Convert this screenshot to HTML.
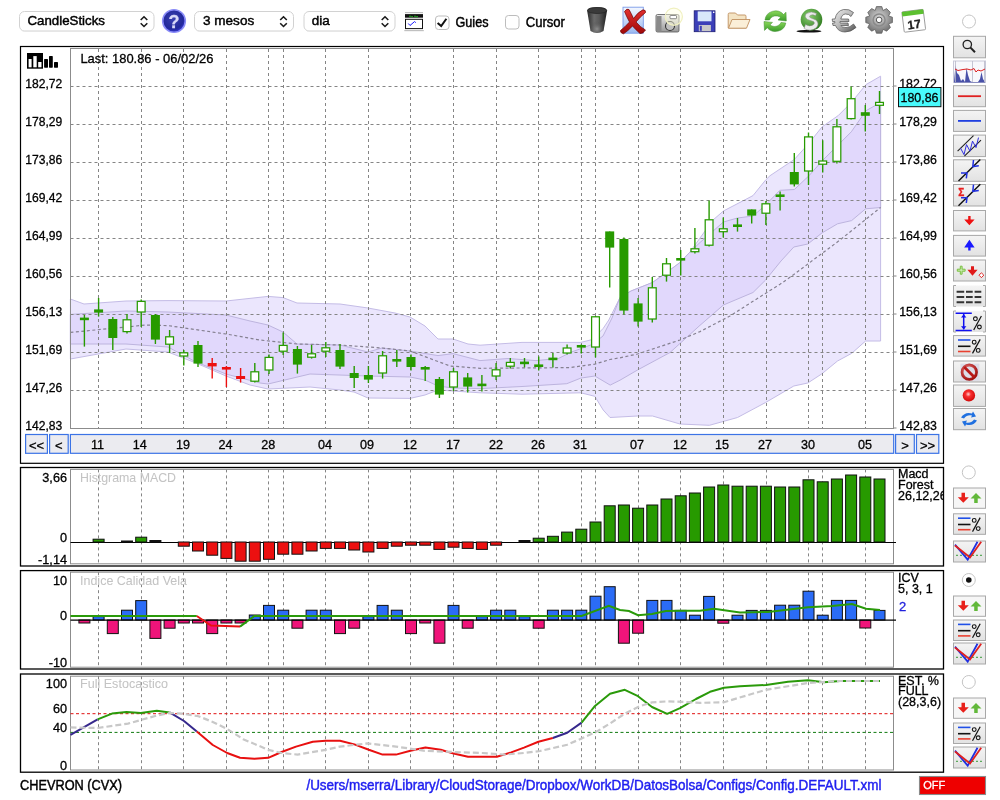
<!DOCTYPE html><html><head><meta charset="utf-8"><style>html,body{margin:0;padding:0;background:#fff;width:1000px;height:800px;overflow:hidden}svg{display:block}</style></head><body>
<svg width="1000" height="800" viewBox="0 0 1000 800" font-family="Liberation Sans, sans-serif" style="will-change:transform">
<defs>
<linearGradient id="gbtn" x1="0" y1="0" x2="0" y2="1"><stop offset="0" stop-color="#f4f4f4"/><stop offset="1" stop-color="#e2e2e2"/></linearGradient>
<radialGradient id="ghelp" cx="0.45" cy="0.4" r="0.65"><stop offset="0" stop-color="#3a40b0"/><stop offset="0.7" stop-color="#22289a"/><stop offset="1" stop-color="#3a3ae0"/></radialGradient>
<linearGradient id="gtrash" x1="0" y1="0" x2="1" y2="0"><stop offset="0" stop-color="#3a3a3a"/><stop offset="0.5" stop-color="#8a8a8a"/><stop offset="1" stop-color="#2e2e2e"/></linearGradient>
<radialGradient id="ggear" cx="0.5" cy="0.4" r="0.6"><stop offset="0" stop-color="#d8d8d8"/><stop offset="1" stop-color="#707070"/></radialGradient>
</defs>
<rect x="19.5" y="11.5" width="134.5" height="19.5" rx="5" fill="#fff" stroke="#d2d2d2" stroke-width="1"/>
<rect x="22.5" y="30.6" width="128.5" height="1" fill="#e6e6e6"/>
<text x="27.4" y="25" font-size="13.5" fill="#000" textLength="77.6" lengthAdjust="spacingAndGlyphs" stroke="#000" stroke-width="0.45">CandleSticks</text>
<path d="M140.7 20 L144.0 16.8 L147.3 20 M140.7 23.3 L144.0 26.5 L147.3 23.3" fill="none" stroke="#1a1a1a" stroke-width="1.6"/>
<rect x="194.5" y="11.5" width="99.0" height="19.5" rx="5" fill="#fff" stroke="#d2d2d2" stroke-width="1"/>
<rect x="197.5" y="30.6" width="93.0" height="1" fill="#e6e6e6"/>
<text x="203.0" y="25" font-size="13.5" fill="#000" textLength="51.2" lengthAdjust="spacingAndGlyphs" stroke="#000" stroke-width="0.45">3 mesos</text>
<path d="M280.2 20 L283.5 16.8 L286.8 20 M280.2 23.3 L283.5 26.5 L286.8 23.3" fill="none" stroke="#1a1a1a" stroke-width="1.6"/>
<rect x="304.0" y="11.5" width="91.0" height="19.5" rx="5" fill="#fff" stroke="#d2d2d2" stroke-width="1"/>
<rect x="307.0" y="30.6" width="85.0" height="1" fill="#e6e6e6"/>
<text x="311.8" y="25" font-size="13.5" fill="#000" textLength="18.0" lengthAdjust="spacingAndGlyphs" stroke="#000" stroke-width="0.45">dia</text>
<path d="M381.7 20 L385.0 16.8 L388.3 20 M381.7 23.3 L385.0 26.5 L388.3 23.3" fill="none" stroke="#1a1a1a" stroke-width="1.6"/>
<circle cx="174" cy="21" r="11.3" fill="url(#ghelp)" stroke="#8a8cf8" stroke-width="1.6"/>
<text x="174" y="27.8" font-size="18" font-weight="bold" fill="#d8d8f8" text-anchor="middle" stroke="#d8d8f8" stroke-width="0.3">?</text>
<rect x="405" y="12" width="18" height="1.2" fill="#c0c0c0"/>
<rect x="405" y="14.1" width="18" height="3.6" fill="#111"/>
<path d="M409 16.6 q1 -1.5 2 0 q1 1 2 -0.3 M414 16.6 q1 -1.5 2 0 q1 1 2 -0.3" stroke="#22c022" stroke-width="0.9" fill="none"/>
<rect x="405.5" y="19.3" width="17" height="9.3" fill="#fff" stroke="#111" stroke-width="1"/>
<path d="M408.3 23.5 L410 25.5 L414.5 21.6 L415.8 22.6" stroke="#1a1aff" stroke-width="1" fill="none"/>
<rect x="404.3" y="30" width="19.5" height="1.2" fill="#c0c0c0"/>
<rect x="435.5" y="16" width="13.5" height="13.5" rx="3" fill="#fff" stroke="#bdbdbd"/>
<path d="M437.6 22.9 L441.2 26.1 L446.4 18.7" stroke="#111" stroke-width="2" fill="none"/>
<text x="455.5" y="26.8" font-size="14" fill="#000" textLength="33" lengthAdjust="spacingAndGlyphs" stroke="#000" stroke-width="0.45">Guies</text>
<rect x="505.5" y="15.5" width="13.5" height="13.5" rx="3" fill="#fff" stroke="#bdbdbd"/>
<text x="525.7" y="26.8" font-size="14" fill="#000" textLength="39.3" lengthAdjust="spacingAndGlyphs" stroke="#000" stroke-width="0.45">Cursor</text>
<defs><linearGradient id="gtr2" x1="0" y1="0" x2="1" y2="0"><stop offset="0" stop-color="#2a2a2a"/><stop offset="0.35" stop-color="#6a6a6a"/><stop offset="0.6" stop-color="#5a5a5a"/><stop offset="1" stop-color="#1e1e1e"/></linearGradient><radialGradient id="gtr3" cx="0.5" cy="0.75" r="0.5"><stop offset="0" stop-color="#9a9a9a" stop-opacity="0.8"/><stop offset="1" stop-color="#444" stop-opacity="0"/></radialGradient><linearGradient id="gxb" x1="0" y1="0" x2="0" y2="1"><stop offset="0" stop-color="#f4f8ff"/><stop offset="1" stop-color="#9ab8f0"/></linearGradient><linearGradient id="gxr" x1="0" y1="0" x2="0" y2="1"><stop offset="0" stop-color="#e23030"/><stop offset="1" stop-color="#a00808"/></linearGradient><linearGradient id="gcam" x1="0" y1="0" x2="0" y2="1"><stop offset="0" stop-color="#e8e8e8"/><stop offset="1" stop-color="#9a9a9a"/></linearGradient><linearGradient id="grf" x1="0" y1="0" x2="0" y2="1"><stop offset="0" stop-color="#8ad85a"/><stop offset="1" stop-color="#3a9a2a"/></linearGradient><linearGradient id="geu" x1="0" y1="0" x2="1" y2="1"><stop offset="0" stop-color="#f0f0f0"/><stop offset="0.5" stop-color="#b8b8b8"/><stop offset="1" stop-color="#505050"/></linearGradient><radialGradient id="gdl" cx="0.4" cy="0.35" r="0.7"><stop offset="0" stop-color="#8ad070"/><stop offset="1" stop-color="#2e7a1e"/></radialGradient></defs>
<path d="M587.2 11 Q587 7 597 7 Q607 7 607 11 L603.5 31 Q597 35 590.5 31 Z" fill="url(#gtr2)"/>
<path d="M589 20 Q597 14 605 20 L603.5 31 Q597 35 590.5 31 Z" fill="url(#gtr3)"/>
<ellipse cx="597.1" cy="10.5" rx="9.6" ry="3" fill="#3a3a3a" stroke="#222" stroke-width="0.7"/>
<rect x="623" y="7.2" width="20.3" height="26" fill="url(#gxb)" stroke="#7a9ae8" stroke-width="0.9"/>
<path d="M624.5 11.5 Q627 8 629 9.5 Q631 13 633.5 18.5 Q638 12 643 9.8 Q646 10 645.5 12.5 Q640 17 636 22 Q640 27 645.5 30 Q643 34 640 33.5 Q636 30 632.5 26 Q628 31 623.5 33.8 Q620 33 620.5 30.5 Q625 27 629.5 22 Q626.5 16.5 624.5 11.5 Z" fill="url(#gxr)" stroke="#6a0000" stroke-width="0.7"/>
<rect x="656" y="14.5" width="23" height="17.5" rx="1.5" fill="url(#gcam)" stroke="#555" stroke-width="0.8"/>
<rect x="656.5" y="16" width="5" height="15.5" fill="#8a8a8a"/>
<circle cx="670" cy="26" r="4.5" fill="#c0c0c0" stroke="#333" stroke-width="1.1"/>
<circle cx="673.8" cy="16.7" r="8.6" fill="#ffffe0" fill-opacity="0.45" stroke="#f0f0c0" stroke-width="1.2"/>
<rect x="670" y="15.5" width="6.5" height="3.2" rx="0.8" fill="#fff" stroke="#444" stroke-width="0.6"/>
<rect x="694.2" y="10.8" width="20.8" height="20.9" fill="#3b3fb8" stroke="#1a1a70" stroke-width="0.8"/>
<rect x="697.7" y="11.4" width="13.8" height="9.9" fill="#d8e8fa"/>
<rect x="713" y="11.6" width="1.4" height="1.4" fill="#fff"/>
<rect x="698.8" y="25" width="12.1" height="6.2" fill="#c8c8c8"/>
<rect x="699.8" y="25.8" width="2" height="5" fill="#3b3fb8"/>
<path d="M728.2 14.5 Q728 13 729.5 13 L735.5 13 L737.5 15 L745 15 Q746 15 746 16.5 L746 28 L728.2 28 Z" fill="#f4e4c4" stroke="#c09060" stroke-width="0.9"/>
<path d="M728.5 28.2 L732 19.5 L750 19.5 L746.5 28.2 Z" fill="#fbefd8" stroke="#c09060" stroke-width="0.9"/>
<path d="M765 20 A10.5 10 0 0 1 783.5 14.5 L786 12.2 L786.3 21 L778 20 L780.6 17.6 A6.8 6.2 0 0 0 769.5 20 Z" fill="url(#grf)" stroke="#3a8a2a" stroke-width="0.5"/>
<path d="M785.8 23 A10.5 10 0 0 1 767.3 27.8 L764.5 30.4 L764 21.5 L772.5 22.4 L770 24.8 A6.8 6.2 0 0 0 781 22.4 Z" fill="url(#grf)" stroke="#3a8a2a" stroke-width="0.5"/>
<ellipse cx="809" cy="31.2" rx="12.5" ry="1.4" fill="#111"/>
<circle cx="811.5" cy="19.6" r="10.8" fill="url(#gdl)"/>
<path d="M816.5 13.5 Q811 10.5 806.5 13.5 Q803.5 16.5 807.5 19.5 L813.5 21.5 Q815.5 23 813 25 Q809.5 27 805.5 24.5 L804 28.5 Q810.5 32 816 28 Q820 24 816 20 L810.5 17.8 Q808.5 16.8 810.5 15.2 Q813 14 815.5 15.8 Z" fill="#ececec" stroke="#888" stroke-width="0.5"/>
<path d="M853.5 12.5 Q849 8.5 843.5 9.5 Q836.5 11 835 19 L832.2 19 L832.5 21.5 L834.8 21.5 L834.8 23 L832.5 23 L833 25.5 L835.5 25.5 Q838 32 845 32 Q851 32 856 27.5 L853.5 24 Q850 27.5 846 27.5 Q842 27.5 840.8 25.5 L848.5 25.5 L848 23 L840 23 L840 21.5 L849 21.5 L848.5 19 L840.8 19 Q842 14.2 845.5 14 Q849 13.8 851 16.5 Z" fill="url(#geu)" stroke="#505050" stroke-width="0.7"/>
<polygon points="888.5,16.0 892.4,17.2 892.4,22.6 888.5,23.8 888.5,23.8 890.4,27.4 886.6,31.2 883.0,29.3 883.0,29.3 881.8,33.2 876.4,33.2 875.2,29.3 875.2,29.3 871.6,31.2 867.8,27.4 869.7,23.8 869.7,23.8 865.8,22.6 865.8,17.2 869.7,16.0 869.7,16.0 867.8,12.4 871.6,8.6 875.2,10.5 875.2,10.5 876.4,6.6 881.8,6.6 883.0,10.5 883.0,10.5 886.6,8.6 890.4,12.4 888.5,16.0" fill="url(#ggear)" stroke="#606060" stroke-width="0.8" stroke-linejoin="round"/>
<circle cx="879.1" cy="19.9" r="6" fill="none" stroke="#8a8a8a" stroke-width="1.5"/>
<circle cx="879.1" cy="19.9" r="2.8" fill="#fff" stroke="#555" stroke-width="1"/>
<g transform="rotate(-7 914 21)"><rect x="903" y="10.5" width="21.5" height="20.5" rx="1" fill="#fff" stroke="#8a8a8a" stroke-width="0.8"/><rect x="903" y="10.5" width="21.5" height="4.5" fill="#5cc030"/><text x="913.8" y="28.6" font-size="12" font-weight="bold" fill="#222" text-anchor="middle" stroke="#222" stroke-width="0.3">17</text></g>
<circle cx="969" cy="21.5" r="6.5" fill="#fff" stroke="#c4c4c4" stroke-width="1"/>
<rect x="20.5" y="46.5" width="923" height="416.8" fill="#fff" stroke="#000" stroke-width="1.2"/>
<rect x="27" y="53" width="16" height="15.7" fill="#000"/>
<rect x="28.6" y="59" width="3" height="8.3" fill="#fff"/><rect x="33.3" y="56.1" width="3.4" height="11.2" fill="#fff"/><rect x="38.2" y="62" width="3.3" height="5.3" fill="#fff"/>
<rect x="44.1" y="58.9" width="3.9" height="8.8" rx="0.6" fill="#000"/><rect x="49" y="56.1" width="3.8" height="11.6" rx="0.6" fill="#000"/><rect x="54" y="62" width="4" height="5.7" rx="0.6" fill="#000"/>
<polygon points="70.4,299.0 84.0,304.0 126.0,301.0 168.0,300.6 226.0,301.0 268.0,296.4 283.0,297.6 297.0,303.0 340.0,304.0 368.0,308.0 395.0,313.0 410.0,317.0 425.0,326.0 438.0,339.0 453.0,339.0 468.0,344.0 480.0,345.2 522.0,342.4 580.8,342.4 592.0,339.6 603.2,328.4 608.8,320.0 620.0,297.5 631.0,291.0 652.5,282.5 670.0,270.0 680.0,262.5 690.0,252.0 700.0,238.0 713.0,220.0 723.4,211.0 753.0,195.6 765.6,180.0 770.0,175.7 794.4,159.4 809.0,143.2 822.0,126.9 838.3,115.5 851.3,102.5 866.0,84.6 880.6,76.2 880.6,341.0 865.6,341.0 851.6,353.4 837.5,361.0 821.9,373.8 807.8,383.0 793.8,386.0 765.6,402.5 737.5,417.5 709.4,425.3 680.0,424.0 652.5,416.0 637.5,416.0 610.0,417.5 603.2,410.0 594.8,396.3 580.8,392.8 522.0,394.2 480.0,392.8 453.0,391.0 438.0,390.0 425.0,395.0 410.0,398.4 368.0,398.0 354.0,392.0 340.0,390.0 310.0,387.0 268.0,389.0 250.0,385.0 226.0,376.0 196.0,363.0 168.0,352.0 126.0,349.0 70.4,359.0" fill="#ebe6fd" stroke="#c4bce6" stroke-width="1"/>
<polygon points="70.4,314.4 126.0,311.0 168.0,312.0 226.0,315.0 250.0,321.0 268.0,325.0 283.0,332.0 297.0,344.0 340.0,345.0 368.0,352.0 382.0,348.0 410.0,351.0 438.0,355.6 453.0,353.6 480.0,360.6 508.0,358.5 536.0,360.6 558.4,358.5 571.0,352.2 580.8,348.7 592.0,344.5 603.0,336.0 612.0,318.0 620.0,297.5 631.0,291.0 652.5,282.5 670.0,270.0 680.0,262.5 690.0,252.0 700.0,242.5 723.4,222.0 737.5,218.0 753.0,216.0 765.6,205.0 779.8,190.3 794.4,189.5 809.0,175.7 822.0,161.0 838.3,144.8 851.3,131.8 866.0,110.7 880.6,102.5 880.6,207.5 865.6,208.8 851.6,220.6 837.5,223.8 821.9,233.0 807.8,244.0 793.8,247.0 781.0,261.0 765.6,280.0 753.0,292.5 723.4,305.0 700.0,325.3 670.0,352.5 637.5,370.0 620.0,380.2 610.2,385.1 594.8,376.0 580.8,378.1 566.8,383.7 522.0,386.5 480.0,388.6 453.0,388.0 438.0,386.0 425.0,380.0 410.0,377.0 368.0,376.0 310.0,374.0 268.0,384.0 260.0,383.0 226.0,374.0 196.0,362.0 168.0,347.0 126.0,344.0 70.4,344.0" fill="#e1d8fc" stroke="#bdb4de" stroke-width="1"/>
<polyline points="70.4,332.4 126.0,327.0 146.0,325.0 168.0,325.6 226.0,334.0 260.0,340.0 297.0,344.0 340.0,345.0 382.0,348.0 410.0,351.0 450.0,366.0 480.0,368.3 569.6,367.6 594.8,364.1 610.0,359.5 620.0,357.8 637.5,354.0 680.0,340.0 700.0,331.6 730.0,316.0 755.0,300.0 780.0,284.3 793.8,274.5 840.0,240.0 880.6,207.5" fill="none" stroke="#858090" stroke-width="1.2" stroke-dasharray="3,2.5"/>
<line x1="98.5" y1="49.0" x2="98.5" y2="428.5" stroke="#858585" stroke-width="1" stroke-dasharray="3,3"/>
<line x1="141.5" y1="49.0" x2="141.5" y2="428.5" stroke="#858585" stroke-width="1" stroke-dasharray="3,3"/>
<line x1="183.5" y1="49.0" x2="183.5" y2="428.5" stroke="#858585" stroke-width="1" stroke-dasharray="3,3"/>
<line x1="226.5" y1="49.0" x2="226.5" y2="428.5" stroke="#858585" stroke-width="1" stroke-dasharray="3,3"/>
<line x1="268.5" y1="49.0" x2="268.5" y2="428.5" stroke="#858585" stroke-width="1" stroke-dasharray="3,3"/>
<line x1="283.5" y1="49.0" x2="283.5" y2="428.5" stroke="#858585" stroke-width="1" stroke-dasharray="3,3"/>
<line x1="325.5" y1="49.0" x2="325.5" y2="428.5" stroke="#858585" stroke-width="1" stroke-dasharray="3,3"/>
<line x1="368.5" y1="49.0" x2="368.5" y2="428.5" stroke="#858585" stroke-width="1" stroke-dasharray="3,3"/>
<line x1="410.5" y1="49.0" x2="410.5" y2="428.5" stroke="#858585" stroke-width="1" stroke-dasharray="3,3"/>
<line x1="453.5" y1="49.0" x2="453.5" y2="428.5" stroke="#858585" stroke-width="1" stroke-dasharray="3,3"/>
<line x1="496.5" y1="49.0" x2="496.5" y2="428.5" stroke="#858585" stroke-width="1" stroke-dasharray="3,3"/>
<line x1="538.5" y1="49.0" x2="538.5" y2="428.5" stroke="#858585" stroke-width="1" stroke-dasharray="3,3"/>
<line x1="581.5" y1="49.0" x2="581.5" y2="428.5" stroke="#858585" stroke-width="1" stroke-dasharray="3,3"/>
<line x1="595.5" y1="49.0" x2="595.5" y2="428.5" stroke="#858585" stroke-width="1" stroke-dasharray="3,3"/>
<line x1="638.5" y1="49.0" x2="638.5" y2="428.5" stroke="#858585" stroke-width="1" stroke-dasharray="3,3"/>
<line x1="680.5" y1="49.0" x2="680.5" y2="428.5" stroke="#858585" stroke-width="1" stroke-dasharray="3,3"/>
<line x1="723.5" y1="49.0" x2="723.5" y2="428.5" stroke="#858585" stroke-width="1" stroke-dasharray="3,3"/>
<line x1="766.5" y1="49.0" x2="766.5" y2="428.5" stroke="#858585" stroke-width="1" stroke-dasharray="3,3"/>
<line x1="808.5" y1="49.0" x2="808.5" y2="428.5" stroke="#858585" stroke-width="1" stroke-dasharray="3,3"/>
<line x1="822.5" y1="49.0" x2="822.5" y2="428.5" stroke="#858585" stroke-width="1" stroke-dasharray="3,3"/>
<line x1="865.5" y1="49.0" x2="865.5" y2="428.5" stroke="#858585" stroke-width="1" stroke-dasharray="3,3"/>
<line x1="70.5" y1="86.5" x2="893.5" y2="86.5" stroke="#858585" stroke-width="1" stroke-dasharray="3,3"/>
<line x1="70.5" y1="124.5" x2="893.5" y2="124.5" stroke="#858585" stroke-width="1" stroke-dasharray="3,3"/>
<line x1="70.5" y1="162.5" x2="893.5" y2="162.5" stroke="#858585" stroke-width="1" stroke-dasharray="3,3"/>
<line x1="70.5" y1="200.5" x2="893.5" y2="200.5" stroke="#858585" stroke-width="1" stroke-dasharray="3,3"/>
<line x1="70.5" y1="238.5" x2="893.5" y2="238.5" stroke="#858585" stroke-width="1" stroke-dasharray="3,3"/>
<line x1="70.5" y1="276.5" x2="893.5" y2="276.5" stroke="#858585" stroke-width="1" stroke-dasharray="3,3"/>
<line x1="70.5" y1="314.5" x2="893.5" y2="314.5" stroke="#858585" stroke-width="1" stroke-dasharray="3,3"/>
<line x1="70.5" y1="352.5" x2="893.5" y2="352.5" stroke="#858585" stroke-width="1" stroke-dasharray="3,3"/>
<line x1="70.5" y1="390.5" x2="893.5" y2="390.5" stroke="#858585" stroke-width="1" stroke-dasharray="3,3"/>
<rect x="70.5" y="48.5" width="823.0" height="380.0" fill="none" stroke="#8c8c8c" stroke-width="1"/>
<line x1="84.4" y1="315.0" x2="84.4" y2="346.6" stroke="#279a00" stroke-width="1.4"/>
<rect x="79.9" y="317.6" width="9.0" height="2.6" fill="#279a00"/>
<line x1="98.6" y1="298.0" x2="98.6" y2="316.6" stroke="#279a00" stroke-width="1.4"/>
<rect x="94.1" y="309.4" width="9.0" height="3.2" fill="#279a00"/>
<line x1="112.8" y1="317.0" x2="112.8" y2="350.0" stroke="#279a00" stroke-width="1.4"/>
<rect x="108.3" y="319.0" width="9.0" height="19.0" fill="#279a00"/>
<line x1="127.0" y1="314.0" x2="127.0" y2="333.6" stroke="#279a00" stroke-width="1.4"/>
<rect x="123.1" y="319.8" width="7.8" height="11.8" fill="#fff" stroke="#279a00" stroke-width="1.25"/>
<line x1="141.2" y1="299.4" x2="141.2" y2="327.0" stroke="#279a00" stroke-width="1.4"/>
<rect x="137.3" y="301.4" width="7.8" height="10.6" fill="#fff" stroke="#279a00" stroke-width="1.25"/>
<line x1="155.4" y1="314.0" x2="155.4" y2="344.0" stroke="#279a00" stroke-width="1.4"/>
<rect x="150.9" y="315.0" width="9.0" height="24.6" fill="#279a00"/>
<line x1="169.6" y1="330.0" x2="169.6" y2="353.0" stroke="#279a00" stroke-width="1.4"/>
<rect x="165.7" y="336.8" width="7.8" height="7.4" fill="#fff" stroke="#279a00" stroke-width="1.25"/>
<line x1="183.8" y1="350.0" x2="183.8" y2="365.6" stroke="#279a00" stroke-width="1.4"/>
<rect x="179.9" y="352.8" width="7.8" height="3.2" fill="#fff" stroke="#279a00" stroke-width="1.25"/>
<line x1="198.0" y1="341.0" x2="198.0" y2="367.0" stroke="#279a00" stroke-width="1.4"/>
<rect x="193.5" y="345.0" width="9.0" height="18.6" fill="#279a00"/>
<line x1="212.2" y1="358.0" x2="212.2" y2="378.6" stroke="#ec1010" stroke-width="1.4"/>
<rect x="207.7" y="363.0" width="9.0" height="3.4" fill="#ec1010"/>
<line x1="226.4" y1="366.0" x2="226.4" y2="387.0" stroke="#ec1010" stroke-width="1.4"/>
<rect x="221.9" y="367.0" width="9.0" height="2.6" fill="#ec1010"/>
<line x1="240.6" y1="368.0" x2="240.6" y2="382.6" stroke="#ec1010" stroke-width="1.4"/>
<rect x="236.1" y="376.0" width="9.0" height="3.0" fill="#ec1010"/>
<line x1="254.8" y1="363.0" x2="254.8" y2="382.6" stroke="#279a00" stroke-width="1.4"/>
<rect x="250.9" y="371.8" width="7.8" height="9.4" fill="#fff" stroke="#279a00" stroke-width="1.25"/>
<line x1="269.0" y1="354.4" x2="269.0" y2="374.0" stroke="#279a00" stroke-width="1.4"/>
<rect x="265.1" y="357.4" width="7.8" height="12.6" fill="#fff" stroke="#279a00" stroke-width="1.25"/>
<line x1="283.2" y1="332.4" x2="283.2" y2="355.0" stroke="#279a00" stroke-width="1.4"/>
<rect x="279.3" y="345.4" width="7.8" height="5.8" fill="#fff" stroke="#279a00" stroke-width="1.25"/>
<line x1="297.4" y1="346.0" x2="297.4" y2="373.6" stroke="#279a00" stroke-width="1.4"/>
<rect x="292.9" y="349.0" width="9.0" height="15.6" fill="#279a00"/>
<line x1="311.6" y1="345.0" x2="311.6" y2="358.6" stroke="#279a00" stroke-width="1.4"/>
<rect x="307.7" y="353.8" width="7.8" height="3.4" fill="#fff" stroke="#279a00" stroke-width="1.25"/>
<line x1="325.8" y1="342.0" x2="325.8" y2="357.0" stroke="#279a00" stroke-width="1.4"/>
<rect x="321.9" y="347.8" width="7.8" height="3.4" fill="#fff" stroke="#279a00" stroke-width="1.25"/>
<line x1="340.0" y1="344.0" x2="340.0" y2="369.0" stroke="#279a00" stroke-width="1.4"/>
<rect x="335.5" y="350.0" width="9.0" height="16.6" fill="#279a00"/>
<line x1="354.2" y1="366.0" x2="354.2" y2="388.0" stroke="#279a00" stroke-width="1.4"/>
<rect x="349.7" y="373.0" width="9.0" height="5.0" fill="#279a00"/>
<line x1="368.4" y1="366.0" x2="368.4" y2="383.0" stroke="#279a00" stroke-width="1.4"/>
<rect x="363.9" y="375.0" width="9.0" height="4.6" fill="#279a00"/>
<line x1="382.6" y1="351.0" x2="382.6" y2="378.6" stroke="#279a00" stroke-width="1.4"/>
<rect x="378.7" y="355.8" width="7.8" height="17.2" fill="#fff" stroke="#279a00" stroke-width="1.25"/>
<line x1="396.8" y1="350.0" x2="396.8" y2="367.0" stroke="#279a00" stroke-width="1.4"/>
<rect x="392.3" y="359.0" width="9.0" height="2.6" fill="#279a00"/>
<line x1="411.0" y1="354.4" x2="411.0" y2="370.6" stroke="#279a00" stroke-width="1.4"/>
<rect x="406.5" y="357.0" width="9.0" height="10.0" fill="#279a00"/>
<line x1="425.2" y1="366.0" x2="425.2" y2="381.0" stroke="#279a00" stroke-width="1.4"/>
<rect x="420.7" y="367.0" width="9.0" height="2.6" fill="#279a00"/>
<line x1="439.4" y1="377.0" x2="439.4" y2="398.0" stroke="#279a00" stroke-width="1.4"/>
<rect x="434.9" y="379.0" width="9.0" height="15.6" fill="#279a00"/>
<line x1="453.5" y1="368.0" x2="453.5" y2="391.0" stroke="#279a00" stroke-width="1.4"/>
<rect x="449.6" y="371.8" width="7.8" height="15.2" fill="#fff" stroke="#279a00" stroke-width="1.25"/>
<line x1="467.7" y1="373.0" x2="467.7" y2="392.6" stroke="#279a00" stroke-width="1.4"/>
<rect x="463.2" y="377.4" width="9.0" height="9.2" fill="#279a00"/>
<line x1="481.9" y1="375.0" x2="481.9" y2="391.6" stroke="#279a00" stroke-width="1.4"/>
<rect x="477.4" y="383.6" width="9.0" height="2.6" fill="#279a00"/>
<line x1="496.1" y1="363.0" x2="496.1" y2="380.0" stroke="#279a00" stroke-width="1.4"/>
<rect x="492.2" y="369.8" width="7.8" height="6.2" fill="#fff" stroke="#279a00" stroke-width="1.25"/>
<line x1="510.3" y1="358.0" x2="510.3" y2="368.6" stroke="#279a00" stroke-width="1.4"/>
<rect x="506.4" y="362.4" width="7.8" height="3.8" fill="#fff" stroke="#279a00" stroke-width="1.25"/>
<line x1="524.5" y1="358.0" x2="524.5" y2="367.4" stroke="#279a00" stroke-width="1.4"/>
<rect x="520.0" y="361.6" width="9.0" height="2.6" fill="#279a00"/>
<line x1="538.7" y1="356.6" x2="538.7" y2="370.6" stroke="#279a00" stroke-width="1.4"/>
<rect x="534.2" y="364.4" width="9.0" height="2.6" fill="#279a00"/>
<line x1="552.9" y1="353.0" x2="552.9" y2="367.4" stroke="#279a00" stroke-width="1.4"/>
<rect x="548.4" y="357.6" width="9.0" height="2.6" fill="#279a00"/>
<line x1="567.1" y1="344.4" x2="567.1" y2="354.6" stroke="#279a00" stroke-width="1.4"/>
<rect x="563.2" y="348.0" width="7.8" height="5.0" fill="#fff" stroke="#279a00" stroke-width="1.25"/>
<line x1="581.3" y1="344.4" x2="581.3" y2="353.6" stroke="#279a00" stroke-width="1.4"/>
<rect x="576.8" y="345.0" width="9.0" height="2.6" fill="#279a00"/>
<line x1="595.5" y1="316.0" x2="595.5" y2="357.4" stroke="#279a00" stroke-width="1.4"/>
<rect x="591.6" y="316.8" width="7.8" height="30.2" fill="#fff" stroke="#279a00" stroke-width="1.25"/>
<line x1="609.7" y1="231.4" x2="609.7" y2="287.6" stroke="#279a00" stroke-width="1.4"/>
<rect x="605.2" y="231.4" width="9.0" height="16.2" fill="#279a00"/>
<line x1="623.9" y1="237.4" x2="623.9" y2="314.4" stroke="#279a00" stroke-width="1.4"/>
<rect x="619.4" y="239.0" width="9.0" height="71.6" fill="#279a00"/>
<line x1="638.1" y1="298.0" x2="638.1" y2="326.6" stroke="#279a00" stroke-width="1.4"/>
<rect x="633.6" y="303.4" width="9.0" height="18.2" fill="#279a00"/>
<line x1="652.3" y1="277.0" x2="652.3" y2="322.6" stroke="#279a00" stroke-width="1.4"/>
<rect x="648.4" y="287.8" width="7.8" height="31.2" fill="#fff" stroke="#279a00" stroke-width="1.25"/>
<line x1="666.5" y1="258.0" x2="666.5" y2="281.6" stroke="#279a00" stroke-width="1.4"/>
<rect x="662.6" y="263.8" width="7.8" height="11.4" fill="#fff" stroke="#279a00" stroke-width="1.25"/>
<line x1="680.7" y1="250.0" x2="680.7" y2="275.6" stroke="#279a00" stroke-width="1.4"/>
<rect x="676.2" y="258.0" width="9.0" height="2.6" fill="#279a00"/>
<line x1="694.9" y1="228.0" x2="694.9" y2="253.6" stroke="#279a00" stroke-width="1.4"/>
<rect x="691.0" y="248.8" width="7.8" height="2.9" fill="#fff" stroke="#279a00" stroke-width="1.25"/>
<line x1="709.1" y1="200.4" x2="709.1" y2="246.6" stroke="#279a00" stroke-width="1.4"/>
<rect x="705.2" y="219.8" width="7.8" height="25.4" fill="#fff" stroke="#279a00" stroke-width="1.25"/>
<line x1="723.3" y1="217.6" x2="723.3" y2="237.6" stroke="#279a00" stroke-width="1.4"/>
<rect x="719.4" y="228.8" width="7.8" height="2.9" fill="#fff" stroke="#279a00" stroke-width="1.25"/>
<line x1="737.5" y1="218.0" x2="737.5" y2="231.6" stroke="#279a00" stroke-width="1.4"/>
<rect x="733.0" y="224.4" width="9.0" height="2.6" fill="#279a00"/>
<line x1="751.7" y1="209.4" x2="751.7" y2="223.6" stroke="#279a00" stroke-width="1.4"/>
<rect x="747.2" y="209.4" width="9.0" height="6.2" fill="#279a00"/>
<line x1="765.9" y1="201.0" x2="765.9" y2="225.0" stroke="#279a00" stroke-width="1.4"/>
<rect x="762.0" y="203.8" width="7.8" height="9.4" fill="#fff" stroke="#279a00" stroke-width="1.25"/>
<line x1="780.1" y1="191.4" x2="780.1" y2="210.6" stroke="#279a00" stroke-width="1.4"/>
<rect x="775.6" y="194.4" width="9.0" height="2.6" fill="#279a00"/>
<line x1="794.3" y1="153.0" x2="794.3" y2="186.5" stroke="#279a00" stroke-width="1.4"/>
<rect x="789.8" y="172.0" width="9.0" height="12.4" fill="#279a00"/>
<line x1="808.5" y1="132.5" x2="808.5" y2="185.0" stroke="#279a00" stroke-width="1.4"/>
<rect x="804.6" y="136.9" width="7.8" height="34.1" fill="#fff" stroke="#279a00" stroke-width="1.25"/>
<line x1="822.7" y1="140.3" x2="822.7" y2="172.5" stroke="#279a00" stroke-width="1.4"/>
<rect x="818.8" y="161.0" width="7.8" height="3.2" fill="#fff" stroke="#279a00" stroke-width="1.25"/>
<line x1="836.9" y1="119.0" x2="836.9" y2="163.5" stroke="#279a00" stroke-width="1.4"/>
<rect x="833.0" y="126.8" width="7.8" height="34.5" fill="#fff" stroke="#279a00" stroke-width="1.25"/>
<line x1="851.1" y1="86.5" x2="851.1" y2="119.6" stroke="#279a00" stroke-width="1.4"/>
<rect x="847.2" y="98.7" width="7.8" height="19.9" fill="#fff" stroke="#279a00" stroke-width="1.25"/>
<line x1="865.3" y1="105.0" x2="865.3" y2="131.6" stroke="#279a00" stroke-width="1.4"/>
<rect x="860.8" y="112.2" width="9.0" height="3.6" fill="#279a00"/>
<line x1="879.5" y1="91.0" x2="879.5" y2="114.0" stroke="#279a00" stroke-width="1.4"/>
<rect x="875.6" y="102.4" width="7.8" height="2.9" fill="#fff" stroke="#279a00" stroke-width="1.25"/>
<text x="25.3" y="87.8" font-size="13" fill="#000" textLength="37" lengthAdjust="spacingAndGlyphs" stroke="#000" stroke-width="0.3">182,72</text>
<text x="899.2" y="87.8" font-size="13" fill="#000" textLength="37.8" lengthAdjust="spacingAndGlyphs" stroke="#000" stroke-width="0.3">182,72</text>
<line x1="893.7" y1="86.0" x2="896.5" y2="86.0" stroke="#888" stroke-width="1"/>
<text x="25.3" y="125.8" font-size="13" fill="#000" textLength="37" lengthAdjust="spacingAndGlyphs" stroke="#000" stroke-width="0.3">178,29</text>
<text x="899.2" y="125.8" font-size="13" fill="#000" textLength="37.8" lengthAdjust="spacingAndGlyphs" stroke="#000" stroke-width="0.3">178,29</text>
<line x1="893.7" y1="124.0" x2="896.5" y2="124.0" stroke="#888" stroke-width="1"/>
<text x="25.3" y="163.8" font-size="13" fill="#000" textLength="37" lengthAdjust="spacingAndGlyphs" stroke="#000" stroke-width="0.3">173,86</text>
<text x="899.2" y="163.8" font-size="13" fill="#000" textLength="37.8" lengthAdjust="spacingAndGlyphs" stroke="#000" stroke-width="0.3">173,86</text>
<line x1="893.7" y1="162.0" x2="896.5" y2="162.0" stroke="#888" stroke-width="1"/>
<text x="25.3" y="201.8" font-size="13" fill="#000" textLength="37" lengthAdjust="spacingAndGlyphs" stroke="#000" stroke-width="0.3">169,42</text>
<text x="899.2" y="201.8" font-size="13" fill="#000" textLength="37.8" lengthAdjust="spacingAndGlyphs" stroke="#000" stroke-width="0.3">169,42</text>
<line x1="893.7" y1="200.0" x2="896.5" y2="200.0" stroke="#888" stroke-width="1"/>
<text x="25.3" y="239.8" font-size="13" fill="#000" textLength="37" lengthAdjust="spacingAndGlyphs" stroke="#000" stroke-width="0.3">164,99</text>
<text x="899.2" y="239.8" font-size="13" fill="#000" textLength="37.8" lengthAdjust="spacingAndGlyphs" stroke="#000" stroke-width="0.3">164,99</text>
<line x1="893.7" y1="238.0" x2="896.5" y2="238.0" stroke="#888" stroke-width="1"/>
<text x="25.3" y="277.8" font-size="13" fill="#000" textLength="37" lengthAdjust="spacingAndGlyphs" stroke="#000" stroke-width="0.3">160,56</text>
<text x="899.2" y="277.8" font-size="13" fill="#000" textLength="37.8" lengthAdjust="spacingAndGlyphs" stroke="#000" stroke-width="0.3">160,56</text>
<line x1="893.7" y1="276.0" x2="896.5" y2="276.0" stroke="#888" stroke-width="1"/>
<text x="25.3" y="315.8" font-size="13" fill="#000" textLength="37" lengthAdjust="spacingAndGlyphs" stroke="#000" stroke-width="0.3">156,13</text>
<text x="899.2" y="315.8" font-size="13" fill="#000" textLength="37.8" lengthAdjust="spacingAndGlyphs" stroke="#000" stroke-width="0.3">156,13</text>
<line x1="893.7" y1="314.0" x2="896.5" y2="314.0" stroke="#888" stroke-width="1"/>
<text x="25.3" y="353.8" font-size="13" fill="#000" textLength="37" lengthAdjust="spacingAndGlyphs" stroke="#000" stroke-width="0.3">151,69</text>
<text x="899.2" y="353.8" font-size="13" fill="#000" textLength="37.8" lengthAdjust="spacingAndGlyphs" stroke="#000" stroke-width="0.3">151,69</text>
<line x1="893.7" y1="352.0" x2="896.5" y2="352.0" stroke="#888" stroke-width="1"/>
<text x="25.3" y="391.8" font-size="13" fill="#000" textLength="37" lengthAdjust="spacingAndGlyphs" stroke="#000" stroke-width="0.3">147,26</text>
<text x="899.2" y="391.8" font-size="13" fill="#000" textLength="37.8" lengthAdjust="spacingAndGlyphs" stroke="#000" stroke-width="0.3">147,26</text>
<line x1="893.7" y1="390.0" x2="896.5" y2="390.0" stroke="#888" stroke-width="1"/>
<text x="25.3" y="429.8" font-size="13" fill="#000" textLength="37" lengthAdjust="spacingAndGlyphs" stroke="#000" stroke-width="0.3">142,83</text>
<text x="899.2" y="429.8" font-size="13" fill="#000" textLength="37.8" lengthAdjust="spacingAndGlyphs" stroke="#000" stroke-width="0.3">142,83</text>
<line x1="893.7" y1="428.0" x2="896.5" y2="428.0" stroke="#888" stroke-width="1"/>
<rect x="898.5" y="87.5" width="42.4" height="19.2" fill="#48fafc" stroke="#111" stroke-width="1"/>
<text x="900.5" y="102" font-size="13.5" fill="#000" textLength="38" lengthAdjust="spacingAndGlyphs" stroke="#000" stroke-width="0.3">180,86</text>
<text x="80.4" y="63" font-size="13.5" fill="#000" textLength="133" lengthAdjust="spacingAndGlyphs" stroke="#000" stroke-width="0.3">Last: 180.86 - 06/02/26</text>
<rect x="25.6" y="434.5" width="21.8" height="18.8" fill="#ebebf0" stroke="#3b73e6" stroke-width="1.2"/>
<text x="36.5" y="449.5" font-size="13" fill="#000" text-anchor="middle" stroke="#000" stroke-width="0.3">&lt;&lt;</text>
<rect x="49.6" y="434.5" width="18.6" height="18.8" fill="#ebebf0" stroke="#3b73e6" stroke-width="1.2"/>
<text x="58.9" y="449.5" font-size="13" fill="#000" text-anchor="middle" stroke="#000" stroke-width="0.3">&lt;</text>
<rect x="70.4" y="434.5" width="823.3" height="18.8" fill="#ebebf0" stroke="#3b73e6" stroke-width="1.2"/>
<rect x="895.6" y="434.5" width="18.7" height="18.8" fill="#ebebf0" stroke="#3b73e6" stroke-width="1.2"/>
<text x="905.0" y="449.5" font-size="13" fill="#000" text-anchor="middle" stroke="#000" stroke-width="0.3">&gt;</text>
<rect x="916.5" y="434.5" width="22.3" height="18.8" fill="#ebebf0" stroke="#3b73e6" stroke-width="1.2"/>
<text x="927.6" y="449.5" font-size="13" fill="#000" text-anchor="middle" stroke="#000" stroke-width="0.3">&gt;&gt;</text>
<text x="97.6" y="448.7" font-size="12.6" fill="#000" text-anchor="middle" stroke="#000" stroke-width="0.3">11</text>
<text x="139.8" y="448.7" font-size="12.6" fill="#000" text-anchor="middle" stroke="#000" stroke-width="0.3">14</text>
<text x="183.0" y="448.7" font-size="12.6" fill="#000" text-anchor="middle" stroke="#000" stroke-width="0.3">19</text>
<text x="225.6" y="448.7" font-size="12.6" fill="#000" text-anchor="middle" stroke="#000" stroke-width="0.3">24</text>
<text x="268.2" y="448.7" font-size="12.6" fill="#000" text-anchor="middle" stroke="#000" stroke-width="0.3">28</text>
<text x="325.0" y="448.7" font-size="12.6" fill="#000" text-anchor="middle" stroke="#000" stroke-width="0.3">04</text>
<text x="367.0" y="448.7" font-size="12.6" fill="#000" text-anchor="middle" stroke="#000" stroke-width="0.3">09</text>
<text x="410.0" y="448.7" font-size="12.6" fill="#000" text-anchor="middle" stroke="#000" stroke-width="0.3">12</text>
<text x="453.0" y="448.7" font-size="12.6" fill="#000" text-anchor="middle" stroke="#000" stroke-width="0.3">17</text>
<text x="496.0" y="448.7" font-size="12.6" fill="#000" text-anchor="middle" stroke="#000" stroke-width="0.3">22</text>
<text x="538.0" y="448.7" font-size="12.6" fill="#000" text-anchor="middle" stroke="#000" stroke-width="0.3">26</text>
<text x="580.0" y="448.7" font-size="12.6" fill="#000" text-anchor="middle" stroke="#000" stroke-width="0.3">31</text>
<text x="637.0" y="448.7" font-size="12.6" fill="#000" text-anchor="middle" stroke="#000" stroke-width="0.3">07</text>
<text x="680.0" y="448.7" font-size="12.6" fill="#000" text-anchor="middle" stroke="#000" stroke-width="0.3">12</text>
<text x="722.0" y="448.7" font-size="12.6" fill="#000" text-anchor="middle" stroke="#000" stroke-width="0.3">15</text>
<text x="765.0" y="448.7" font-size="12.6" fill="#000" text-anchor="middle" stroke="#000" stroke-width="0.3">27</text>
<text x="808.0" y="448.7" font-size="12.6" fill="#000" text-anchor="middle" stroke="#000" stroke-width="0.3">30</text>
<text x="865.0" y="448.7" font-size="12.6" fill="#000" text-anchor="middle" stroke="#000" stroke-width="0.3">05</text>
<rect x="20.5" y="467.5" width="923" height="98.5" fill="#fff" stroke="#000" stroke-width="1.3"/>
<line x1="98.5" y1="469.4" x2="98.5" y2="563.8" stroke="#858585" stroke-width="1" stroke-dasharray="3,3"/>
<line x1="141.5" y1="469.4" x2="141.5" y2="563.8" stroke="#858585" stroke-width="1" stroke-dasharray="3,3"/>
<line x1="183.5" y1="469.4" x2="183.5" y2="563.8" stroke="#858585" stroke-width="1" stroke-dasharray="3,3"/>
<line x1="226.5" y1="469.4" x2="226.5" y2="563.8" stroke="#858585" stroke-width="1" stroke-dasharray="3,3"/>
<line x1="268.5" y1="469.4" x2="268.5" y2="563.8" stroke="#858585" stroke-width="1" stroke-dasharray="3,3"/>
<line x1="283.5" y1="469.4" x2="283.5" y2="563.8" stroke="#858585" stroke-width="1" stroke-dasharray="3,3"/>
<line x1="325.5" y1="469.4" x2="325.5" y2="563.8" stroke="#858585" stroke-width="1" stroke-dasharray="3,3"/>
<line x1="368.5" y1="469.4" x2="368.5" y2="563.8" stroke="#858585" stroke-width="1" stroke-dasharray="3,3"/>
<line x1="410.5" y1="469.4" x2="410.5" y2="563.8" stroke="#858585" stroke-width="1" stroke-dasharray="3,3"/>
<line x1="453.5" y1="469.4" x2="453.5" y2="563.8" stroke="#858585" stroke-width="1" stroke-dasharray="3,3"/>
<line x1="496.5" y1="469.4" x2="496.5" y2="563.8" stroke="#858585" stroke-width="1" stroke-dasharray="3,3"/>
<line x1="538.5" y1="469.4" x2="538.5" y2="563.8" stroke="#858585" stroke-width="1" stroke-dasharray="3,3"/>
<line x1="581.5" y1="469.4" x2="581.5" y2="563.8" stroke="#858585" stroke-width="1" stroke-dasharray="3,3"/>
<line x1="595.5" y1="469.4" x2="595.5" y2="563.8" stroke="#858585" stroke-width="1" stroke-dasharray="3,3"/>
<line x1="638.5" y1="469.4" x2="638.5" y2="563.8" stroke="#858585" stroke-width="1" stroke-dasharray="3,3"/>
<line x1="680.5" y1="469.4" x2="680.5" y2="563.8" stroke="#858585" stroke-width="1" stroke-dasharray="3,3"/>
<line x1="723.5" y1="469.4" x2="723.5" y2="563.8" stroke="#858585" stroke-width="1" stroke-dasharray="3,3"/>
<line x1="766.5" y1="469.4" x2="766.5" y2="563.8" stroke="#858585" stroke-width="1" stroke-dasharray="3,3"/>
<line x1="808.5" y1="469.4" x2="808.5" y2="563.8" stroke="#858585" stroke-width="1" stroke-dasharray="3,3"/>
<line x1="822.5" y1="469.4" x2="822.5" y2="563.8" stroke="#858585" stroke-width="1" stroke-dasharray="3,3"/>
<line x1="865.5" y1="469.4" x2="865.5" y2="563.8" stroke="#858585" stroke-width="1" stroke-dasharray="3,3"/>
<rect x="70.5" y="469.4" width="823.0" height="94.4" fill="none" stroke="#8c8c8c" stroke-width="1"/>
<text x="80" y="482.2" font-size="13" fill="#c4c4c4" textLength="96" lengthAdjust="spacingAndGlyphs" stroke="#c4c4c4" stroke-width="0.05">Histgrama MACD</text>
<line x1="70.5" y1="542.5" x2="896" y2="542.5" stroke="#000" stroke-width="1"/>
<rect x="93.1" y="539.2" width="11" height="2.8" fill="#279a00" stroke="#111" stroke-width="1"/>
<rect x="121.5" y="541.0" width="11" height="1.0" fill="#111" stroke="#111" stroke-width="1"/>
<rect x="135.7" y="537.2" width="11" height="4.8" fill="#279a00" stroke="#111" stroke-width="1"/>
<rect x="149.9" y="540.5" width="11" height="1.5" fill="#111" stroke="#111" stroke-width="1"/>
<rect x="178.3" y="542.0" width="11" height="4.2" fill="#ec1010" stroke="#111" stroke-width="1"/>
<rect x="192.5" y="542.0" width="11" height="9.0" fill="#ec1010" stroke="#111" stroke-width="1"/>
<rect x="206.7" y="542.0" width="11" height="13.2" fill="#ec1010" stroke="#111" stroke-width="1"/>
<rect x="220.9" y="542.0" width="11" height="16.4" fill="#ec1010" stroke="#111" stroke-width="1"/>
<rect x="235.1" y="542.0" width="11" height="19.2" fill="#ec1010" stroke="#111" stroke-width="1"/>
<rect x="249.3" y="542.0" width="11" height="19.2" fill="#ec1010" stroke="#111" stroke-width="1"/>
<rect x="263.5" y="542.0" width="11" height="17.3" fill="#ec1010" stroke="#111" stroke-width="1"/>
<rect x="277.7" y="542.0" width="11" height="12.2" fill="#ec1010" stroke="#111" stroke-width="1"/>
<rect x="291.9" y="542.0" width="11" height="12.2" fill="#ec1010" stroke="#111" stroke-width="1"/>
<rect x="306.1" y="542.0" width="11" height="9.0" fill="#ec1010" stroke="#111" stroke-width="1"/>
<rect x="320.3" y="542.0" width="11" height="6.4" fill="#ec1010" stroke="#111" stroke-width="1"/>
<rect x="334.5" y="542.0" width="11" height="6.4" fill="#ec1010" stroke="#111" stroke-width="1"/>
<rect x="348.7" y="542.0" width="11" height="8.0" fill="#ec1010" stroke="#111" stroke-width="1"/>
<rect x="362.9" y="542.0" width="11" height="10.0" fill="#ec1010" stroke="#111" stroke-width="1"/>
<rect x="377.1" y="542.0" width="11" height="6.4" fill="#ec1010" stroke="#111" stroke-width="1"/>
<rect x="391.3" y="542.0" width="11" height="4.2" fill="#ec1010" stroke="#111" stroke-width="1"/>
<rect x="405.5" y="542.0" width="11" height="3.2" fill="#ec1010" stroke="#111" stroke-width="1"/>
<rect x="419.7" y="542.0" width="11" height="3.2" fill="#ec1010" stroke="#111" stroke-width="1"/>
<rect x="433.9" y="542.0" width="11" height="7.4" fill="#ec1010" stroke="#111" stroke-width="1"/>
<rect x="448.0" y="542.0" width="11" height="5.2" fill="#ec1010" stroke="#111" stroke-width="1"/>
<rect x="462.2" y="542.0" width="11" height="6.4" fill="#ec1010" stroke="#111" stroke-width="1"/>
<rect x="476.4" y="542.0" width="11" height="7.4" fill="#ec1010" stroke="#111" stroke-width="1"/>
<rect x="490.6" y="542.0" width="11" height="3.2" fill="#ec1010" stroke="#111" stroke-width="1"/>
<rect x="519.0" y="540.5" width="11" height="1.5" fill="#111" stroke="#111" stroke-width="1"/>
<rect x="533.2" y="538.2" width="11" height="3.8" fill="#279a00" stroke="#111" stroke-width="1"/>
<rect x="547.4" y="536.3" width="11" height="5.7" fill="#279a00" stroke="#111" stroke-width="1"/>
<rect x="561.6" y="532.1" width="11" height="9.9" fill="#279a00" stroke="#111" stroke-width="1"/>
<rect x="575.8" y="529.2" width="11" height="12.8" fill="#279a00" stroke="#111" stroke-width="1"/>
<rect x="590.0" y="522.0" width="11" height="20.0" fill="#279a00" stroke="#111" stroke-width="1"/>
<rect x="604.2" y="505.8" width="11" height="36.2" fill="#279a00" stroke="#111" stroke-width="1"/>
<rect x="618.4" y="505.0" width="11" height="37.0" fill="#279a00" stroke="#111" stroke-width="1"/>
<rect x="632.6" y="508.2" width="11" height="33.8" fill="#279a00" stroke="#111" stroke-width="1"/>
<rect x="646.8" y="505.0" width="11" height="37.0" fill="#279a00" stroke="#111" stroke-width="1"/>
<rect x="661.0" y="499.0" width="11" height="43.0" fill="#279a00" stroke="#111" stroke-width="1"/>
<rect x="675.2" y="495.8" width="11" height="46.2" fill="#279a00" stroke="#111" stroke-width="1"/>
<rect x="689.4" y="493.0" width="11" height="49.0" fill="#279a00" stroke="#111" stroke-width="1"/>
<rect x="703.6" y="487.0" width="11" height="55.0" fill="#279a00" stroke="#111" stroke-width="1"/>
<rect x="717.8" y="485.0" width="11" height="57.0" fill="#279a00" stroke="#111" stroke-width="1"/>
<rect x="732.0" y="486.2" width="11" height="55.8" fill="#279a00" stroke="#111" stroke-width="1"/>
<rect x="746.2" y="486.2" width="11" height="55.8" fill="#279a00" stroke="#111" stroke-width="1"/>
<rect x="760.4" y="486.2" width="11" height="55.8" fill="#279a00" stroke="#111" stroke-width="1"/>
<rect x="774.6" y="487.0" width="11" height="55.0" fill="#279a00" stroke="#111" stroke-width="1"/>
<rect x="788.8" y="487.0" width="11" height="55.0" fill="#279a00" stroke="#111" stroke-width="1"/>
<rect x="803.0" y="479.8" width="11" height="62.2" fill="#279a00" stroke="#111" stroke-width="1"/>
<rect x="817.2" y="481.8" width="11" height="60.2" fill="#279a00" stroke="#111" stroke-width="1"/>
<rect x="831.4" y="479.0" width="11" height="63.0" fill="#279a00" stroke="#111" stroke-width="1"/>
<rect x="845.6" y="475.0" width="11" height="67.0" fill="#279a00" stroke="#111" stroke-width="1"/>
<rect x="859.8" y="477.0" width="11" height="65.0" fill="#279a00" stroke="#111" stroke-width="1"/>
<rect x="874.0" y="479.0" width="11" height="63.0" fill="#279a00" stroke="#111" stroke-width="1"/>
<text x="67" y="482" font-size="12.7" fill="#000" text-anchor="end" stroke="#000" stroke-width="0.3">3,66</text>
<text x="67" y="542" font-size="12.7" fill="#000" text-anchor="end" stroke="#000" stroke-width="0.3">0</text>
<text x="67" y="564" font-size="12.7" fill="#000" text-anchor="end" stroke="#000" stroke-width="0.3">-1,14</text>
<clipPath id="rc"><rect x="895" y="0" width="48" height="800"/></clipPath>
<g clip-path="url(#rc)">
<text x="898" y="477.6" font-size="12.5" fill="#000" stroke="#000" stroke-width="0.3">Macd</text>
<text x="898" y="488.7" font-size="12.5" fill="#000" stroke="#000" stroke-width="0.3">Forest</text>
<text x="898" y="499.6" font-size="12.5" fill="#000" stroke="#000" stroke-width="0.3">26,12,26</text>
</g>
<rect x="20.5" y="570.6" width="923" height="98.4" fill="#fff" stroke="#000" stroke-width="1.3"/>
<line x1="98.5" y1="572.2" x2="98.5" y2="667.2" stroke="#858585" stroke-width="1" stroke-dasharray="3,3"/>
<line x1="141.5" y1="572.2" x2="141.5" y2="667.2" stroke="#858585" stroke-width="1" stroke-dasharray="3,3"/>
<line x1="183.5" y1="572.2" x2="183.5" y2="667.2" stroke="#858585" stroke-width="1" stroke-dasharray="3,3"/>
<line x1="226.5" y1="572.2" x2="226.5" y2="667.2" stroke="#858585" stroke-width="1" stroke-dasharray="3,3"/>
<line x1="268.5" y1="572.2" x2="268.5" y2="667.2" stroke="#858585" stroke-width="1" stroke-dasharray="3,3"/>
<line x1="283.5" y1="572.2" x2="283.5" y2="667.2" stroke="#858585" stroke-width="1" stroke-dasharray="3,3"/>
<line x1="325.5" y1="572.2" x2="325.5" y2="667.2" stroke="#858585" stroke-width="1" stroke-dasharray="3,3"/>
<line x1="368.5" y1="572.2" x2="368.5" y2="667.2" stroke="#858585" stroke-width="1" stroke-dasharray="3,3"/>
<line x1="410.5" y1="572.2" x2="410.5" y2="667.2" stroke="#858585" stroke-width="1" stroke-dasharray="3,3"/>
<line x1="453.5" y1="572.2" x2="453.5" y2="667.2" stroke="#858585" stroke-width="1" stroke-dasharray="3,3"/>
<line x1="496.5" y1="572.2" x2="496.5" y2="667.2" stroke="#858585" stroke-width="1" stroke-dasharray="3,3"/>
<line x1="538.5" y1="572.2" x2="538.5" y2="667.2" stroke="#858585" stroke-width="1" stroke-dasharray="3,3"/>
<line x1="581.5" y1="572.2" x2="581.5" y2="667.2" stroke="#858585" stroke-width="1" stroke-dasharray="3,3"/>
<line x1="595.5" y1="572.2" x2="595.5" y2="667.2" stroke="#858585" stroke-width="1" stroke-dasharray="3,3"/>
<line x1="638.5" y1="572.2" x2="638.5" y2="667.2" stroke="#858585" stroke-width="1" stroke-dasharray="3,3"/>
<line x1="680.5" y1="572.2" x2="680.5" y2="667.2" stroke="#858585" stroke-width="1" stroke-dasharray="3,3"/>
<line x1="723.5" y1="572.2" x2="723.5" y2="667.2" stroke="#858585" stroke-width="1" stroke-dasharray="3,3"/>
<line x1="766.5" y1="572.2" x2="766.5" y2="667.2" stroke="#858585" stroke-width="1" stroke-dasharray="3,3"/>
<line x1="808.5" y1="572.2" x2="808.5" y2="667.2" stroke="#858585" stroke-width="1" stroke-dasharray="3,3"/>
<line x1="822.5" y1="572.2" x2="822.5" y2="667.2" stroke="#858585" stroke-width="1" stroke-dasharray="3,3"/>
<line x1="865.5" y1="572.2" x2="865.5" y2="667.2" stroke="#858585" stroke-width="1" stroke-dasharray="3,3"/>
<rect x="70.5" y="572.2" width="823.0" height="95.0" fill="none" stroke="#8c8c8c" stroke-width="1"/>
<text x="80" y="585.2" font-size="13" fill="#c4c4c4" textLength="107" lengthAdjust="spacingAndGlyphs" stroke="#c4c4c4" stroke-width="0.05">Indice Calidad Vela</text>
<rect x="78.9" y="620.0" width="11" height="3.0" fill="#f0147a" stroke="#111" stroke-width="1"/>
<rect x="93.1" y="616.6" width="11" height="3.4" fill="#2b6cf6" stroke="#111" stroke-width="1"/>
<rect x="107.3" y="620.0" width="11" height="13.6" fill="#f0147a" stroke="#111" stroke-width="1"/>
<rect x="121.5" y="610.2" width="11" height="9.8" fill="#2b6cf6" stroke="#111" stroke-width="1"/>
<rect x="135.7" y="600.6" width="11" height="19.4" fill="#2b6cf6" stroke="#111" stroke-width="1"/>
<rect x="149.9" y="620.0" width="11" height="18.4" fill="#f0147a" stroke="#111" stroke-width="1"/>
<rect x="164.1" y="620.0" width="11" height="8.2" fill="#f0147a" stroke="#111" stroke-width="1"/>
<rect x="178.3" y="620.0" width="11" height="3.0" fill="#f0147a" stroke="#111" stroke-width="1"/>
<rect x="192.5" y="620.0" width="11" height="3.0" fill="#f0147a" stroke="#111" stroke-width="1"/>
<rect x="206.7" y="620.0" width="11" height="13.6" fill="#f0147a" stroke="#111" stroke-width="1"/>
<rect x="220.9" y="620.0" width="11" height="3.0" fill="#f0147a" stroke="#111" stroke-width="1"/>
<rect x="235.1" y="620.0" width="11" height="3.0" fill="#f0147a" stroke="#111" stroke-width="1"/>
<rect x="249.3" y="615.0" width="11" height="5.0" fill="#2b6cf6" stroke="#111" stroke-width="1"/>
<rect x="263.5" y="605.4" width="11" height="14.6" fill="#2b6cf6" stroke="#111" stroke-width="1"/>
<rect x="277.7" y="610.2" width="11" height="9.8" fill="#2b6cf6" stroke="#111" stroke-width="1"/>
<rect x="291.9" y="620.0" width="11" height="8.2" fill="#f0147a" stroke="#111" stroke-width="1"/>
<rect x="306.1" y="610.2" width="11" height="9.8" fill="#2b6cf6" stroke="#111" stroke-width="1"/>
<rect x="320.3" y="610.2" width="11" height="9.8" fill="#2b6cf6" stroke="#111" stroke-width="1"/>
<rect x="334.5" y="620.0" width="11" height="13.6" fill="#f0147a" stroke="#111" stroke-width="1"/>
<rect x="348.7" y="620.0" width="11" height="8.2" fill="#f0147a" stroke="#111" stroke-width="1"/>
<rect x="362.9" y="616.6" width="11" height="3.4" fill="#2b6cf6" stroke="#111" stroke-width="1"/>
<rect x="377.1" y="605.4" width="11" height="14.6" fill="#2b6cf6" stroke="#111" stroke-width="1"/>
<rect x="391.3" y="610.2" width="11" height="9.8" fill="#2b6cf6" stroke="#111" stroke-width="1"/>
<rect x="405.5" y="620.0" width="11" height="13.6" fill="#f0147a" stroke="#111" stroke-width="1"/>
<rect x="419.7" y="620.0" width="11" height="3.0" fill="#f0147a" stroke="#111" stroke-width="1"/>
<rect x="433.9" y="620.0" width="11" height="23.2" fill="#f0147a" stroke="#111" stroke-width="1"/>
<rect x="448.0" y="605.4" width="11" height="14.6" fill="#2b6cf6" stroke="#111" stroke-width="1"/>
<rect x="462.2" y="620.0" width="11" height="8.2" fill="#f0147a" stroke="#111" stroke-width="1"/>
<rect x="476.4" y="616.6" width="11" height="3.4" fill="#2b6cf6" stroke="#111" stroke-width="1"/>
<rect x="490.6" y="610.2" width="11" height="9.8" fill="#2b6cf6" stroke="#111" stroke-width="1"/>
<rect x="504.8" y="610.2" width="11" height="9.8" fill="#2b6cf6" stroke="#111" stroke-width="1"/>
<rect x="519.0" y="616.6" width="11" height="3.4" fill="#2b6cf6" stroke="#111" stroke-width="1"/>
<rect x="533.2" y="620.0" width="11" height="8.2" fill="#f0147a" stroke="#111" stroke-width="1"/>
<rect x="547.4" y="610.2" width="11" height="9.8" fill="#2b6cf6" stroke="#111" stroke-width="1"/>
<rect x="561.6" y="610.2" width="11" height="9.8" fill="#2b6cf6" stroke="#111" stroke-width="1"/>
<rect x="575.8" y="610.2" width="11" height="9.8" fill="#2b6cf6" stroke="#111" stroke-width="1"/>
<rect x="590.0" y="596.2" width="11" height="23.8" fill="#2b6cf6" stroke="#111" stroke-width="1"/>
<rect x="604.2" y="586.7" width="11" height="33.3" fill="#2b6cf6" stroke="#111" stroke-width="1"/>
<rect x="618.4" y="620.0" width="11" height="23.2" fill="#f0147a" stroke="#111" stroke-width="1"/>
<rect x="632.6" y="620.0" width="11" height="13.2" fill="#f0147a" stroke="#111" stroke-width="1"/>
<rect x="646.8" y="600.4" width="11" height="19.6" fill="#2b6cf6" stroke="#111" stroke-width="1"/>
<rect x="661.0" y="600.4" width="11" height="19.6" fill="#2b6cf6" stroke="#111" stroke-width="1"/>
<rect x="675.2" y="610.4" width="11" height="9.6" fill="#2b6cf6" stroke="#111" stroke-width="1"/>
<rect x="689.4" y="615.2" width="11" height="4.8" fill="#2b6cf6" stroke="#111" stroke-width="1"/>
<rect x="703.6" y="596.4" width="11" height="23.6" fill="#2b6cf6" stroke="#111" stroke-width="1"/>
<rect x="717.8" y="620.0" width="11" height="3.2" fill="#f0147a" stroke="#111" stroke-width="1"/>
<rect x="732.0" y="615.2" width="11" height="4.8" fill="#2b6cf6" stroke="#111" stroke-width="1"/>
<rect x="746.2" y="610.4" width="11" height="9.6" fill="#2b6cf6" stroke="#111" stroke-width="1"/>
<rect x="760.4" y="610.4" width="11" height="9.6" fill="#2b6cf6" stroke="#111" stroke-width="1"/>
<rect x="774.6" y="605.2" width="11" height="14.8" fill="#2b6cf6" stroke="#111" stroke-width="1"/>
<rect x="788.8" y="605.2" width="11" height="14.8" fill="#2b6cf6" stroke="#111" stroke-width="1"/>
<rect x="803.0" y="591.2" width="11" height="28.8" fill="#2b6cf6" stroke="#111" stroke-width="1"/>
<rect x="817.2" y="615.2" width="11" height="4.8" fill="#2b6cf6" stroke="#111" stroke-width="1"/>
<rect x="831.4" y="600.4" width="11" height="19.6" fill="#2b6cf6" stroke="#111" stroke-width="1"/>
<rect x="845.6" y="600.4" width="11" height="19.6" fill="#2b6cf6" stroke="#111" stroke-width="1"/>
<rect x="859.8" y="620.0" width="11" height="8.0" fill="#f0147a" stroke="#111" stroke-width="1"/>
<rect x="874.0" y="610.4" width="11" height="9.6" fill="#2b6cf6" stroke="#111" stroke-width="1"/>
<line x1="70.5" y1="620.2" x2="896" y2="620.2" stroke="#000" stroke-width="1.2"/>
<polyline points="70.5,616.0 196.8,616.0" fill="none" stroke="#2a9a0a" stroke-width="2"/>
<polyline points="196.8,616.0 211.0,625.6 240.0,626.6" fill="none" stroke="#e81010" stroke-width="2"/>
<polyline points="240.0,626.6 254.4,616.0 581.6,616.0 608.8,605.8 620.0,610.0 629.0,611.0 638.0,615.2 652.0,614.0 666.0,611.0 680.0,610.8 700.0,610.8 714.0,608.8 740.0,612.4 768.0,612.0 808.0,607.2 832.0,606.0 852.0,604.0 866.0,608.8 880.0,610.0" fill="none" stroke="#2a9a0a" stroke-width="2"/>
<text x="67" y="584.8" font-size="12.7" fill="#000" text-anchor="end" stroke="#000" stroke-width="0.3">10</text>
<text x="67" y="620" font-size="12.7" fill="#000" text-anchor="end" stroke="#000" stroke-width="0.3">0</text>
<text x="67" y="667" font-size="12.7" fill="#000" text-anchor="end" stroke="#000" stroke-width="0.3">-10</text>
<text x="898" y="581.5" font-size="12.5" fill="#000" stroke="#000" stroke-width="0.3">ICV</text>
<text x="898" y="592.6" font-size="12.5" fill="#000" stroke="#000" stroke-width="0.3">5, 3, 1</text>
<text x="899" y="611" font-size="13" fill="#2222dd" stroke="#2222dd" stroke-width="0.3">2</text>
<rect x="20.5" y="674.0" width="923" height="98.2" fill="#fff" stroke="#000" stroke-width="1.3"/>
<line x1="98.5" y1="676.2" x2="98.5" y2="770.0" stroke="#858585" stroke-width="1" stroke-dasharray="3,3"/>
<line x1="141.5" y1="676.2" x2="141.5" y2="770.0" stroke="#858585" stroke-width="1" stroke-dasharray="3,3"/>
<line x1="183.5" y1="676.2" x2="183.5" y2="770.0" stroke="#858585" stroke-width="1" stroke-dasharray="3,3"/>
<line x1="226.5" y1="676.2" x2="226.5" y2="770.0" stroke="#858585" stroke-width="1" stroke-dasharray="3,3"/>
<line x1="268.5" y1="676.2" x2="268.5" y2="770.0" stroke="#858585" stroke-width="1" stroke-dasharray="3,3"/>
<line x1="283.5" y1="676.2" x2="283.5" y2="770.0" stroke="#858585" stroke-width="1" stroke-dasharray="3,3"/>
<line x1="325.5" y1="676.2" x2="325.5" y2="770.0" stroke="#858585" stroke-width="1" stroke-dasharray="3,3"/>
<line x1="368.5" y1="676.2" x2="368.5" y2="770.0" stroke="#858585" stroke-width="1" stroke-dasharray="3,3"/>
<line x1="410.5" y1="676.2" x2="410.5" y2="770.0" stroke="#858585" stroke-width="1" stroke-dasharray="3,3"/>
<line x1="453.5" y1="676.2" x2="453.5" y2="770.0" stroke="#858585" stroke-width="1" stroke-dasharray="3,3"/>
<line x1="496.5" y1="676.2" x2="496.5" y2="770.0" stroke="#858585" stroke-width="1" stroke-dasharray="3,3"/>
<line x1="538.5" y1="676.2" x2="538.5" y2="770.0" stroke="#858585" stroke-width="1" stroke-dasharray="3,3"/>
<line x1="581.5" y1="676.2" x2="581.5" y2="770.0" stroke="#858585" stroke-width="1" stroke-dasharray="3,3"/>
<line x1="595.5" y1="676.2" x2="595.5" y2="770.0" stroke="#858585" stroke-width="1" stroke-dasharray="3,3"/>
<line x1="638.5" y1="676.2" x2="638.5" y2="770.0" stroke="#858585" stroke-width="1" stroke-dasharray="3,3"/>
<line x1="680.5" y1="676.2" x2="680.5" y2="770.0" stroke="#858585" stroke-width="1" stroke-dasharray="3,3"/>
<line x1="723.5" y1="676.2" x2="723.5" y2="770.0" stroke="#858585" stroke-width="1" stroke-dasharray="3,3"/>
<line x1="766.5" y1="676.2" x2="766.5" y2="770.0" stroke="#858585" stroke-width="1" stroke-dasharray="3,3"/>
<line x1="808.5" y1="676.2" x2="808.5" y2="770.0" stroke="#858585" stroke-width="1" stroke-dasharray="3,3"/>
<line x1="822.5" y1="676.2" x2="822.5" y2="770.0" stroke="#858585" stroke-width="1" stroke-dasharray="3,3"/>
<line x1="865.5" y1="676.2" x2="865.5" y2="770.0" stroke="#858585" stroke-width="1" stroke-dasharray="3,3"/>
<rect x="70.5" y="676.2" width="823.0" height="93.8" fill="none" stroke="#8c8c8c" stroke-width="1"/>
<text x="80" y="687.5" font-size="13" fill="#c4c4c4" textLength="88" lengthAdjust="spacingAndGlyphs" stroke="#c4c4c4" stroke-width="0.05">Full Estocastico</text>
<line x1="70.5" y1="713.7" x2="895" y2="713.7" stroke="#e01010" stroke-width="1" stroke-dasharray="3,2.5"/>
<line x1="70.5" y1="732.4" x2="895" y2="732.4" stroke="#107a10" stroke-width="1" stroke-dasharray="3,2.5"/>
<polyline points="70.5,734.8 97.6,719.4" fill="none" stroke="#36288c" stroke-width="2" stroke-linejoin="round"/>
<polyline points="97.6,719.4 112.0,713.6 126.4,712.0 140.8,713.0 156.8,710.8 169.6,712.4" fill="none" stroke="#2a9a0a" stroke-width="2" stroke-linejoin="round"/>
<polyline points="169.6,712.4 184.0,721.0 196.8,731.6" fill="none" stroke="#36288c" stroke-width="2" stroke-linejoin="round"/>
<polyline points="196.8,731.6 212.8,745.0 227.2,753.0 240.0,757.8 254.4,758.8 268.2,757.8 281.6,752.0 296.0,746.6 312.8,741.8 325.6,740.8 340.0,740.8 354.4,744.4 368.8,749.8 382.6,754.6 396.0,754.6 410.4,750.8 425.4,747.6 440.8,749.8 453.6,753.6 468.0,756.8 482.4,756.8 496.8,756.8 511.2,752.4 524.0,747.6 538.4,741.8 552.8,738.0" fill="none" stroke="#e81010" stroke-width="2" stroke-linejoin="round"/>
<polyline points="552.8,738.0 567.2,732.8 581.6,722.6" fill="none" stroke="#36288c" stroke-width="2" stroke-linejoin="round"/>
<polyline points="581.6,722.6 594.4,706.6 610.0,693.8 624.8,689.8 638.0,696.2 652.0,707.0 667.2,713.8 680.0,708.2 696.0,699.0 710.0,691.8 724.0,687.8 740.0,686.2 766.0,685.0 788.0,681.8 808.0,680.2 824.0,682.2 840.0,681.0 880.0,681.0" fill="none" stroke="#2a9a0a" stroke-width="2" stroke-linejoin="round"/>
<polyline points="70.5,727.4 97.6,728.0 128.0,723.6 140.8,720.0 156.8,715.6 169.6,713.0 182.4,713.6 198.4,716.2 212.8,722.0 227.2,729.0 243.2,739.2 268.2,749.8 281.6,753.0 297.6,754.6 320.0,750.8 325.6,749.8 340.0,746.6 367.2,743.4 396.0,746.6 424.8,750.8 453.6,752.0 482.4,753.0 504.8,754.6 524.0,753.0 540.0,751.0 567.2,744.8 581.6,738.4 596.0,732.0 610.4,723.2 624.8,713.6 639.2,706.4 652.0,702.4 668.0,701.3 684.0,702.0 700.0,702.9 724.0,702.2 766.0,689.8 808.0,683.0 840.0,681.0 880.0,681.0" fill="none" stroke="#c8c8c8" stroke-width="2.2" stroke-dasharray="6,3"/>
<text x="67" y="688" font-size="12.7" fill="#000" text-anchor="end" stroke="#000" stroke-width="0.3">100</text>
<text x="67" y="713" font-size="12.7" fill="#000" text-anchor="end" stroke="#000" stroke-width="0.3">60</text>
<text x="67" y="731.8" font-size="12.7" fill="#000" text-anchor="end" stroke="#000" stroke-width="0.3">40</text>
<text x="67" y="770.2" font-size="12.7" fill="#000" text-anchor="end" stroke="#000" stroke-width="0.3">0</text>
<text x="898" y="684.5" font-size="12.5" fill="#000" stroke="#000" stroke-width="0.3">EST. %</text>
<text x="898" y="695.2" font-size="12.5" fill="#000" stroke="#000" stroke-width="0.3">FULL</text>
<text x="898" y="705.8" font-size="12.5" fill="#000" stroke="#000" stroke-width="0.3">(28,3,6)</text>
<text x="20" y="789.6" font-size="14" fill="#000" textLength="102" lengthAdjust="spacingAndGlyphs" stroke="#000" stroke-width="0.45">CHEVRON (CVX)</text>
<text x="306.4" y="790" font-size="14" fill="#1e1ef0" textLength="575" lengthAdjust="spacingAndGlyphs" stroke="#1e1ef0" stroke-width="0.45">/Users/mserra/Library/CloudStorage/Dropbox/WorkDB/DatosBolsa/Configs/Config.DEFAULT.xml</text>
<rect x="919.5" y="776.5" width="66" height="18" fill="#ee0000" stroke="#8a8a8a" stroke-width="1.1"/>
<text x="923.3" y="789.3" font-size="11.5" fill="#fff" textLength="22" lengthAdjust="spacingAndGlyphs" stroke="#fff" stroke-width="0.3">OFF</text>
<rect x="953.5" y="36.3" width="32" height="21.5" fill="url(#gbtn)" stroke="#a8a8a8" stroke-width="1"/>
<line x1="969.8" y1="46.9" x2="975" y2="52.3" stroke="#222" stroke-width="2"/><circle cx="967.3" cy="44.5" r="4.2" fill="#e8e8e8" stroke="#222" stroke-width="1.3"/>
<rect x="953.5" y="61.0" width="32" height="21.5" fill="#f8f8fc" stroke="#c8c8d8" stroke-width="1"/>
<path d="M954 82.0 L955.5 65.0 L957 73.0 L959 75.0 L961 81.0 L963 79.0 L965 82.0 L966.5 68.0 L968 75.0 L970 81.0 L972 82.0 L975 82.0 L978 82.0 L980 79.0 L981.5 72.0 L983 79.0 L985 82.0 L985 82.5 L954 82.5 Z" fill="#4850a8"/>
<path d="M954.5 61.0 h1 M967 61.0 h1 M979 61.0 h1" stroke="#bbb" stroke-width="0"/><path d="M955.5 61.0 v21 M972.5 61.0 v21 M984.5 61.0 v21" stroke="#b8b8c8" stroke-width="0.8"/>
<path d="M955 69.0 L958 70.5 L963 69.5 L967 69.0 L971 70.0 L974 68.5 L976 72.0 L978 70.0 L981 71.0 L985 69.0" fill="none" stroke="#dd2020" stroke-width="1"/>
<rect x="953.5" y="85.7" width="32" height="21.0" fill="url(#gbtn)" stroke="#a8a8a8" stroke-width="1"/>
<line x1="958" y1="96.2" x2="981" y2="96.2" stroke="#e02020" stroke-width="1.8"/>
<rect x="953.5" y="110.4" width="32" height="21.0" fill="url(#gbtn)" stroke="#a8a8a8" stroke-width="1"/>
<line x1="958" y1="120.9" x2="981" y2="120.9" stroke="#2040e0" stroke-width="1.8"/>
<rect x="953.5" y="135.1" width="32" height="21.5" fill="url(#gbtn)" stroke="#a8a8a8" stroke-width="1"/>
<path d="M957.6 151.1 L973.5 135.6 M964.4 156.1 L981 140.1" stroke="#222" stroke-width="1.1"/><path d="M960.5 148.1 L964 154.6 L966.5 144.6 L970 151.1 L972.5 141.1 L976 147.6 L978.5 137.6" stroke="#3030e0" fill="none" stroke-width="1"/>
<rect x="953.5" y="159.8" width="32" height="21.5" fill="url(#gbtn)" stroke="#a8a8a8" stroke-width="1"/>
<line x1="958.5" y1="181.0" x2="980.3" y2="159.5" stroke="#111" stroke-width="1.5"/><path d="M961 173.1 L967 173.1 L966.3 178.3 M973.5 160.0 L972.8 166.6 L978.8 165.8" stroke="#2030e0" fill="none" stroke-width="1.5"/>
<rect x="953.5" y="184.5" width="32" height="21.5" fill="url(#gbtn)" stroke="#a8a8a8" stroke-width="1"/>
<line x1="958.5" y1="205.7" x2="980.3" y2="184.2" stroke="#111" stroke-width="1.5"/><path d="M961 197.8 L967 197.8 L966.3 203.0 M973.5 184.7 L972.8 191.3 L978.8 190.5" stroke="#2030e0" fill="none" stroke-width="1.5"/><text x="958.3" y="196.1" font-size="10" font-weight="bold" fill="#e82020" stroke="#e82020" stroke-width="0.3">&#931;</text>
<rect x="953.5" y="210.5" width="32" height="20.4" fill="url(#gbtn)" stroke="#a8a8a8" stroke-width="1"/>
<path d="M968.2 216.0 h2.4 v3.5 h4 l-5.2 5.8 l-5.2 -5.8 h4 Z" fill="#ee1010"/>
<rect x="953.5" y="235.4" width="32" height="20.7" fill="url(#gbtn)" stroke="#a8a8a8" stroke-width="1"/>
<path d="M968.2 250.6 h2.4 v-3 h4 l-5.2 -7.8 l-5.2 7.8 h4 Z" fill="#1a1aff"/>
<rect x="953.5" y="260.0" width="32" height="21.0" fill="url(#gbtn)" stroke="#a8a8a8" stroke-width="1"/>
<path d="M960.3 266.2 h1.8 v3 h3 v2 h-3 v3 h-1.8 v-3 h-3 v-2 h3 Z" fill="#c8eab0" stroke="#7ac040" stroke-width="1"/><path d="M971 266.2 h3 v3.5 h3.6 l-5.1 6 l-5.1 -6 h3.6 Z" fill="#e01a1a"/><path d="M981.4 272.8 l2.4 2.4 l-2.4 2.4 l-2.4 -2.4 Z" fill="#fff" stroke="#e01010" stroke-width="0.9"/>
<rect x="953.5" y="285.5" width="32" height="21" fill="url(#gbtn)" stroke="none"/>
<path d="M956 285.5 h-2.5 v21 h2.5 M983 285.5 h2.5 v21 h-2.5" fill="none" stroke="#a8a8a8" stroke-width="1"/>
<path d="M956.6 291.8 h7.6 M966 291.8 h6.7 M974.6 291.8 h6.7" stroke="#333" stroke-width="2"/><path d="M956.6 297.0 h7.6 M966 297.0 h6.7 M974.6 297.0 h6.7" stroke="#333" stroke-width="2"/><path d="M956.6 302.2 h7.6 M966 302.2 h6.7 M974.6 302.2 h6.7" stroke="#333" stroke-width="2"/>
<rect x="953.5" y="311.0" width="32" height="21" fill="url(#gbtn)" stroke="none"/>
<path d="M956 311.0 h-2.5 v21 h2.5 M983 311.0 h2.5 v21 h-2.5" fill="none" stroke="#a8a8a8" stroke-width="1"/>
<path d="M955.6 313.3 h16.2 M955.6 330.4 h16.2 M963.7 313.8 v15.5" stroke="#1010f0" stroke-width="1.5"/><path d="M961 317.5 h5.4 l-2.7 -3.2 Z M961 326.2 h5.4 l-2.7 3.2 Z" fill="#1010f0"/><circle cx="975.4" cy="318.8" r="1.9" fill="none" stroke="#111" stroke-width="1.1"/><circle cx="979.4" cy="327.0" r="1.9" fill="none" stroke="#111" stroke-width="1.1"/><line x1="981.4" y1="316.0" x2="973.7" y2="330.0" stroke="#111" stroke-width="1.2"/>
<rect x="953.5" y="335.6" width="32" height="20.5" fill="url(#gbtn)" stroke="#a8a8a8" stroke-width="1"/>
<path d="M958 340.0 h12.5" stroke="#2050e8" stroke-width="1.6"/><path d="M958 346.3 h12.5" stroke="#111" stroke-width="1.6"/><path d="M958 351.5 h12.5" stroke="#e84030" stroke-width="1.6"/><circle cx="974.2" cy="342.2" r="1.9" fill="none" stroke="#111" stroke-width="1.1"/><circle cx="978.2" cy="350.4" r="1.9" fill="none" stroke="#111" stroke-width="1.1"/><line x1="980.2" y1="339.4" x2="972.5" y2="353.4" stroke="#111" stroke-width="1.2"/>
<defs><radialGradient id="gno" cx="0.4" cy="0.35" r="0.7"><stop offset="0" stop-color="#f08080"/><stop offset="1" stop-color="#a01010"/></radialGradient><radialGradient id="gdot" cx="0.45" cy="0.4" r="0.6"><stop offset="0" stop-color="#ffd0d0"/><stop offset="0.35" stop-color="#f83030"/><stop offset="1" stop-color="#d00808"/></radialGradient></defs>
<rect x="953.5" y="361.0" width="32" height="21.0" fill="url(#gbtn)" stroke="#a8a8a8" stroke-width="1"/>
<rect x="960.4" y="363.6" width="19" height="17.2" fill="#dcdce8"/><circle cx="969.3" cy="372.2" r="7.2" fill="none" stroke="url(#gno)" stroke-width="2.8"/><line x1="964.2" y1="367.1" x2="974.4" y2="377.3" stroke="#b81818" stroke-width="2.8"/>
<rect x="953.5" y="385.0" width="32" height="21.4" fill="url(#gbtn)" stroke="#a8a8a8" stroke-width="1"/>
<circle cx="968.9" cy="395.4" r="6.2" fill="url(#gdot)"/>
<rect x="953.5" y="408.5" width="32" height="21.2" fill="url(#gbtn)" stroke="#a8a8a8" stroke-width="1"/>
<path d="M961 417.5 q4 -6 11 -4 l1 -2 l3 5 l-5 1 l1 -2 q-5 -1 -8 3 Z" fill="#2070e0"/><path d="M977 420.5 q-4 6 -11 4 l-1 2 l-3 -5 l5 -1 l-1 2 q5 1 8 -3 Z" fill="#2070e0"/>
<circle cx="968.8" cy="472.4" r="6.5" fill="#fff" stroke="#c4c4c4" stroke-width="1"/>
<rect x="953.5" y="488.0" width="32" height="20.3" fill="#f6f6f6" stroke="#a8a8a8" stroke-width="1"/>
<path d="M961.5 492.8 h3.5 v4.5 h3.8 l-5.5 5.5 l-5.5 -5.5 h3.7 Z" fill="#e8201a"/><path d="M974.2 503.0 h3.5 v-4.5 h3.8 l-5.5 -5.5 l-5.5 5.5 h3.7 Z" fill="#62b83a"/>
<rect x="953.5" y="513.8" width="32" height="20.5" fill="url(#gbtn)" stroke="#a8a8a8" stroke-width="1"/>
<path d="M958 518.2 h12.5" stroke="#2050e8" stroke-width="1.6"/><path d="M958 524.5 h12.5" stroke="#111" stroke-width="1.6"/><path d="M958 529.7 h12.5" stroke="#e84030" stroke-width="1.6"/><circle cx="974.2" cy="520.4" r="1.9" fill="none" stroke="#111" stroke-width="1.1"/><circle cx="978.2" cy="528.6" r="1.9" fill="none" stroke="#111" stroke-width="1.1"/><line x1="980.2" y1="517.6" x2="972.5" y2="531.6" stroke="#111" stroke-width="1.2"/>
<rect x="953.5" y="541.0" width="32" height="21.0" fill="url(#gbtn)" stroke="#a8a8a8" stroke-width="1"/>
<path d="M956 555.3 h28" stroke="#3a9a3a" stroke-width="1" stroke-dasharray="2,2"/><path d="M955 544.7 L967.7 559.7 L977.5 541.7" fill="none" stroke="#2030e0" stroke-width="1.8"/><path d="M955 545.5 L970 557.5 L981.2 541.7" fill="none" stroke="#e02020" stroke-width="1.8"/>
<circle cx="968.8" cy="580.0" r="6.5" fill="#fff" stroke="#c4c4c4" stroke-width="1"/>
<circle cx="968.8" cy="580.0" r="2.8" fill="#111"/>
<rect x="953.5" y="596.0" width="32" height="20.3" fill="#f6f6f6" stroke="#a8a8a8" stroke-width="1"/>
<path d="M961.5 600.8 h3.5 v4.5 h3.8 l-5.5 5.5 l-5.5 -5.5 h3.7 Z" fill="#e8201a"/><path d="M974.2 611.0 h3.5 v-4.5 h3.8 l-5.5 -5.5 l-5.5 5.5 h3.7 Z" fill="#62b83a"/>
<rect x="953.5" y="620.0" width="32" height="20.5" fill="url(#gbtn)" stroke="#a8a8a8" stroke-width="1"/>
<path d="M958 624.4 h12.5" stroke="#2050e8" stroke-width="1.6"/><path d="M958 630.7 h12.5" stroke="#111" stroke-width="1.6"/><path d="M958 635.9 h12.5" stroke="#e84030" stroke-width="1.6"/><circle cx="974.2" cy="626.6" r="1.9" fill="none" stroke="#111" stroke-width="1.1"/><circle cx="978.2" cy="634.8" r="1.9" fill="none" stroke="#111" stroke-width="1.1"/><line x1="980.2" y1="623.8" x2="972.5" y2="637.8" stroke="#111" stroke-width="1.2"/>
<rect x="953.5" y="643.0" width="32" height="21.0" fill="url(#gbtn)" stroke="#a8a8a8" stroke-width="1"/>
<path d="M956 657.3 h28" stroke="#3a9a3a" stroke-width="1" stroke-dasharray="2,2"/><path d="M955 646.7 L967.7 661.7 L977.5 643.7" fill="none" stroke="#2030e0" stroke-width="1.8"/><path d="M955 647.5 L970 659.5 L981.2 643.7" fill="none" stroke="#e02020" stroke-width="1.8"/>
<circle cx="968.8" cy="682.0" r="6.5" fill="#fff" stroke="#c4c4c4" stroke-width="1"/>
<rect x="953.5" y="698.0" width="32" height="20.3" fill="#f6f6f6" stroke="#a8a8a8" stroke-width="1"/>
<path d="M961.5 702.8 h3.5 v4.5 h3.8 l-5.5 5.5 l-5.5 -5.5 h3.7 Z" fill="#e8201a"/><path d="M974.2 713.0 h3.5 v-4.5 h3.8 l-5.5 -5.5 l-5.5 5.5 h3.7 Z" fill="#62b83a"/>
<rect x="953.5" y="723.0" width="32" height="20.5" fill="url(#gbtn)" stroke="#a8a8a8" stroke-width="1"/>
<path d="M958 727.4 h12.5" stroke="#2050e8" stroke-width="1.6"/><path d="M958 733.7 h12.5" stroke="#111" stroke-width="1.6"/><path d="M958 738.9 h12.5" stroke="#e84030" stroke-width="1.6"/><circle cx="974.2" cy="729.6" r="1.9" fill="none" stroke="#111" stroke-width="1.1"/><circle cx="978.2" cy="737.8" r="1.9" fill="none" stroke="#111" stroke-width="1.1"/><line x1="980.2" y1="726.8" x2="972.5" y2="740.8" stroke="#111" stroke-width="1.2"/>
<rect x="953.5" y="747.0" width="32" height="21.0" fill="url(#gbtn)" stroke="#a8a8a8" stroke-width="1"/>
<path d="M956 761.3 h28" stroke="#3a9a3a" stroke-width="1" stroke-dasharray="2,2"/><path d="M955 750.7 L967.7 765.7 L977.5 747.7" fill="none" stroke="#2030e0" stroke-width="1.8"/><path d="M955 751.5 L970 763.5 L981.2 747.7" fill="none" stroke="#e02020" stroke-width="1.8"/>
</svg></body></html>
